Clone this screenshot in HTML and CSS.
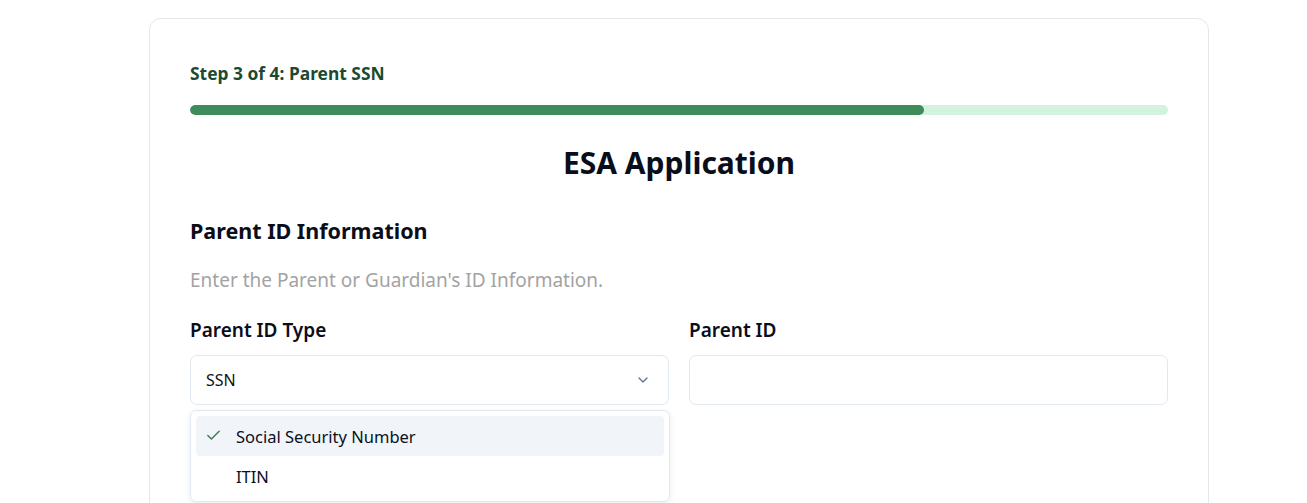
FILE: index.html
```html
<!DOCTYPE html>
<html lang="en">
<head>
<meta charset="utf-8">
<title>ESA Application</title>
<link rel="stylesheet" href="styles.css">
</head>
<body>
<div class="page">
  <div class="card">
    <div class="step">Step 3 of 4: Parent SSN</div>
    <div class="progress"><div class="progress-fill" style="width:75%"></div></div>
    <h1 class="title">ESA Application</h1>
    <h2 class="section">Parent ID Information</h2>
    <p class="desc">Enter the Parent or Guardian's ID Information.</p>
    <div class="grid">
      <div class="field">
        <label class="label">Parent ID Type</label>
        <div class="select">
          <span>SSN</span>
          <svg class="chev" width="16" height="16" viewBox="0 0 24 24" fill="none" stroke="#64748b" stroke-width="2" stroke-linecap="round" stroke-linejoin="round"><path d="M6 9l6 6 6-6"/></svg>
        </div>
        <div class="menu">
          <div class="opt active">
            <svg class="check" width="17" height="17" viewBox="0 0 24 24" fill="none" stroke="#3d7a55" stroke-width="2" stroke-linecap="round" stroke-linejoin="round"><path d="M20 6L9 17l-5-5"/></svg>
            <span>Social Security Number</span>
          </div>
          <div class="opt"><span>ITIN</span></div>
        </div>
      </div>
      <div class="field">
        <label class="label">Parent ID</label>
        <div class="input"></div>
      </div>
    </div>
  </div>
</div>
</body>
</html>
```
FILE: styles.css
```css
* { box-sizing: border-box; }
html, body { margin: 0; padding: 0; background: #fff; overflow: hidden; }
body { font-family: "Noto Sans", "Open Sans", sans-serif; color: #0b0f1f; }
.page { padding-top: 18px; padding-left: 149px; }
.card {
  width: 1060px;
  height: 500px;
  border: 1px solid #e5e7eb;
  border-radius: 12px;
  padding: 42px 40px 0 40px;
}
.step { font-size: 17.4px; font-weight: 700; color: #1c4a30; line-height: 24px; }
.progress { margin-top: 20px; height: 10px; background: #d3f3df; border-radius: 5px; overflow: hidden; }
.progress-fill { height: 100%; background: #3e8b5b; border-radius: 5px; }
.title { margin: 28px 0 0; text-align: center; font-size: 30px; font-weight: 700; line-height: 40px; color: #0a0d1a; }
.section { margin: 34px 0 0; font-size: 21.5px; font-weight: 700; line-height: 28px; color: #0a0d1a; }
.desc { margin: 21px 0 0; font-size: 19px; line-height: 28px; color: #a3a3a3; }
.grid { margin-top: 22px; display: grid; grid-template-columns: 1fr 1fr; gap: 20px; }
.field { position: relative; }
.label { display: block; font-size: 19px; font-weight: 600; line-height: 28px; color: #0a0d1a; }
.select, .input {
  margin-top: 11px;
  height: 50px;
  border: 1px solid #e2e8f0;
  border-radius: 7px;
}
.select { display: flex; align-items: center; justify-content: space-between; padding: 0 17px 0 15px; font-size: 16px; color: #111; }
.menu {
  position: absolute;
  left: 0; right: -1px;
  top: 94px;
  height: 92px;
  border: 1px solid #e2e8f0;
  border-radius: 6px;
  background: #fff;
  box-shadow: 0 2px 6px rgba(0,0,0,0.08);
  padding: 5px;
}
.opt { height: 40px; display: flex; align-items: center; padding-left: 40px; position: relative; font-size: 16.5px; color: #0b0f1f; border-radius: 4px; }
.opt.active { background: #f1f5f9; }
.check { position: absolute; left: 9px; top: 11px; }
```
